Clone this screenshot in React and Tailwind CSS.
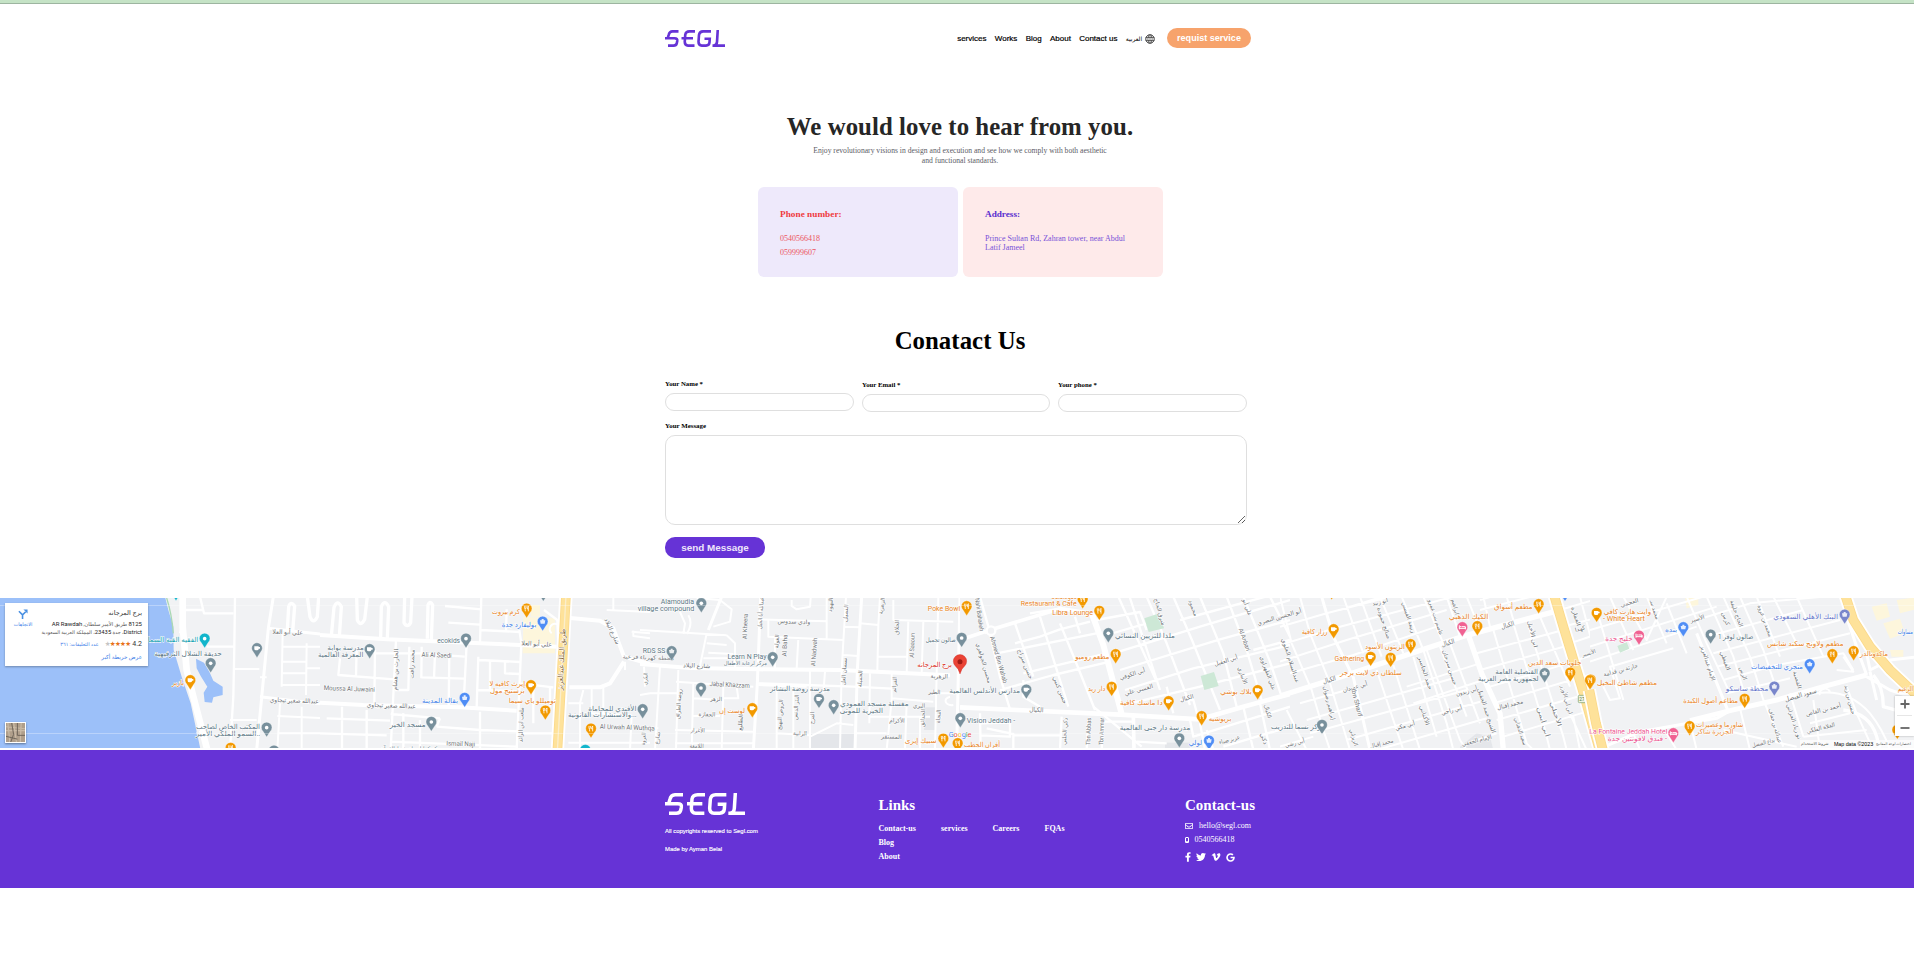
import React from "react";
import { FaRegEnvelope, FaFacebookF, FaTwitter, FaVimeoV, FaGoogle } from "react-icons/fa";

const C = {
  g: "#5b7684",
  o: "#e8811a",
  b: "#3b7de8",
  t: "#129eaf",
  p: "#ec4f8d",
  v: "#6172c9",
  r: "#d93025",
  k: "#6f7377",
  h: "#8a6a3c",
};
const PIN = { g: "#78909c", o: "#f29900", b: "#4f8df5", t: "#12b5cb", p: "#f06292", v: "#7986cb" };

// Each tile covers 330x165 map pixels, drawn on a 990x495 grid.
// labels: [text, centre x, baseline y, width, colour, rotation, size]
// pins: [x, y, colour, glyph]
const TILES = [
  {
    x: 0,
    roads: [
      [9, "M0,46H498M0,430H590"],
      [20, "M548,20V110L560,240L580,320L622,480"],
      [7, "M600,20L612,70H700M540,130L548,100M705,20L703,170L700,320L690,480M620,170H700M545,60H610"],
      [9, "M820,20L805,115L790,270L770,480M805,115L870,122L990,135M780,320L880,332L990,345"],
      [10, "M862,120L866,50Q872,32 884,48L878,125M922,20L930,80Q940,105 952,80L956,20"],
      [6, "M848,125L845,290M920,160L918,315M848,170H990M848,215H920M848,250H920M845,285H990M918,235H990M700,237H778M690,390H770M840,340L832,480M905,350V480M832,378L990,385M832,430H990M780,262H800"],
    ],
    labels: [
      ["الفقيه القبة السما", 519, 157, 152, "t"],
      ["حديقة الشلال الترفيهية", 564, 199, 203, "g"],
      ["بازير", 534, 286, 36, "o"],
      ["علي أبو العلا", 863, 133, 92, "k", 2, 19],
      ["عبدالله صغير تيجاوي", 883, 338, 147, "k", 2, 19],
      ["المكتب الخاص لصاحب", 684, 416, 192, "g"],
      ["السمو الملكي الأمير..", 684, 438, 194, "g"],
    ],
    pins: [[528, 4, "t", "d"], [614, 146, "t", "d"], [771, 175, "g", "c"], [632, 220, "g", "d"], [571, 271, "o", "c"], [800, 413, "g", "d"], [692, 474, "o", "f"], [822, 482, "g", "d"]],
  },
  {
    x: 320,
    roads: [
      [12, "M0,135L200,148L600,165L710,170M0,338L130,345L420,352L590,362"],
      [10, "M34,138L42,52Q52,26 64,50L58,140M110,20L112,90Q122,112 134,88L142,20M182,142L184,50Q194,26 206,50L202,146M254,20L252,98Q262,116 272,98L276,20M322,146L324,45Q330,30 338,45L334,150"],
      [7, "M228,150L212,480M440,160L432,320M484,20L480,160M598,120L604,160L590,480M375,48L484,58M385,98L480,104M480,120L600,126M560,58L558,126M672,60L712,90L715,170M268,170L265,300L225,300M305,170L304,265M345,190L342,265M388,190L386,350M60,205L55,255L222,268M110,175L108,258M165,180L163,338M168,190L300,190L434,200M304,262L432,266M475,200L470,350M478,210L600,216M510,215V300M555,216V250L600,252M475,300L600,304M600,280L700,292M640,290V400M690,292V350M20,385L210,392M0,430L200,436M66,350V480M140,360V480M212,372L360,385M360,385L350,410M300,390V475M350,410L480,420L590,424M480,365V480M212,455L590,470M250,370V480M600,430H720"],
      [12, "M750,84L840,92L880,115L912,200L990,222M912,215L870,280L840,292H748"],
      [6, "M790,300L780,340V480M815,295V370L935,376M850,292V370M935,376L930,480M745,340H790M745,458H990M935,125L990,130M940,122V138L990,145M860,60L990,66M880,24V62M915,215V240M972,230L975,290M695,130A14,14 0 0 1 715,105"],
    ],
    yellow: ["M738,15L728,200L712,485"],
    labels: [
      ["كرم بيروت", 558, 72, 84, "o"],
      ["بوليفارد جدة", 597, 110, 104, "b"],
      ["ecokids", 386, 160, 68, "g"],
      ["مدرسة بوابة", 77, 181, 110, "g"],
      ["المعرفة العالمية", 62, 202, 136, "g"],
      ["علي أبو العلا", 650, 168, 92, "k", 3, 19],
      ["Ali Al Saedi", 350, 202, 90, "k", 2, 20],
      ["محمد رافت", 276, 228, 88, "k", -88, 18],
      ["الحارث بن هشام", 227, 245, 125, "k", -88, 18],
      ["إيرث كافيه لا", 562, 288, 107, "o"],
      ["برستيج مول", 562, 309, 104, "o"],
      ["توميللو باي سيما", 637, 338, 142, "o"],
      ["بقالة المدينة", 360, 338, 108, "b"],
      ["Moussa Al Juwaini", 88, 303, 153, "k", 2, 20],
      ["عبدالله صغير تيجاوي", 214, 353, 147, "k", 2, 19],
      ["مسجد الخير", 263, 410, 108, "g"],
      ["Ismail Naji", 422, 468, 86, "k", 2, 20],
      ["ملعب ابن الرائد", 603, 410, 105, "k", -88, 18],
      ["طريق الملك عبدالعزيز", 726, 215, 185, "h", -87, 22],
      ["الأفندي للمحاماة", 877, 362, 145, "g"],
      ["والاستشارات القانونية...", 847, 381, 206, "g"],
      ["Al Urwah Al Wuthqa", 922, 419, 165, "k", 2, 20],
      ["شارع البلاد", 876, 130, 85, "k", 65, 18],
      ["RDS SS", 1002, 189, 68, "g"],
      ["محطة كهرباء فرعية", 985, 208, 155, "k", 2, 17],
      ["البكري", 976, 272, 35, "k", -85, 17],
      ["العروة", 970, 452, 38, "k", -85, 17],
      ["مركز كفايات لتحفيظ القرآن", 275, 482, 190, "g", 0, 19],
    ],
    pins: [[670, 6, "g", "d"], [620, 56, "o", "f"], [668, 95, "b", "b"], [438, 146, "g", "d"], [149, 178, "g", "c"], [633, 286, "o", "c"], [434, 324, "b", "b"], [676, 362, "o", "f"], [334, 396, "g", "d"], [968, 358, "g", "d"], [813, 416, "o", "f"], [796, 480, "t", "d"]],
  },
  {
    x: 640,
    roads: [
      [12, "M0,222L150,234L355,238L600,240L930,256"],
      [9, "M362,20L352,280L340,480M665,20L652,240L645,480M245,20L205,120M960,20L950,480"],
      [6, "M120,66L135,100L130,132M145,76Q160,100 140,132M0,120L260,136M200,130L180,228M260,136L285,160V232M200,160L260,165M205,188L280,192M190,205H280M170,24L240,30L275,58L270,95L220,110M455,30V48L470,58L510,50L512,24M355,88L560,94M385,90V140L610,150M405,145V235M475,145L470,235M560,20V145M618,20L605,240L600,480M610,110L660,112M610,195L655,198M660,100L715,105L720,20M715,105L712,240M715,200H800M805,90L800,250M760,30V90L940,95M850,95L845,250M895,20L885,480M115,240L108,480M108,275L340,290M160,282L155,480M250,290L245,480M160,325L245,330M290,290L295,325H245M160,378H240M105,420L340,425M105,460H340M60,228L45,480M0,410L55,415M355,285L500,290M410,290V480M460,290V480M510,240V480M410,430L510,436M510,440L590,400L640,405M555,245L550,310M755,250V330L740,480M690,250L688,400M755,325L880,335M690,380H870M650,430H740M800,340L795,480M840,380V480M930,320A14,10 0 1 0 940,345M880,310H945M110,310H30M0,315L30,310"],
      [7, "M355,280L640,290M640,290L755,296"],
    ],
    shade: ["M512,432H645V480H512Z", "M852,352H886V420H852Z"],
    labels: [
      ["Alamoudia", 112, 43, 100, "g", 0, 21],
      ["village compound", 78, 64, 170, "g", 0, 21],
      ["Poke Bowl", 912, 63, 97, "o", 0, 21],
      ["وادي سدوس", 462, 101, 98, "k", 2, 18],
      ["صالون تجميل", 902, 156, 90, "g", 0, 19],
      ["Learn N Play", 321, 208, 117, "g", 0, 21],
      ["مركز لرعاية الأطفال", 316, 225, 130, "g", 0, 17],
      ["شارع البلاد", 170, 233, 82, "k", 2, 18],
      ["برج المرجانه", 884, 230, 104, "r"],
      ["Jabal Khazzam", 269, 291, 121, "k", 3, 20],
      ["مدرسة روضة البشائر", 480, 304, 180, "g"],
      ["مغسلة مسجد العمودي", 703, 349, 206, "g"],
      ["الخيرية للموتى", 664, 369, 130, "g"],
      ["لوست إن", 276, 370, 78, "o"],
      ["سبيك إيزى", 842, 458, 95, "o"],
      ["الزهر", 228, 333, 36, "k", 2, 18],
      ["الحفازة", 201, 379, 50, "k", 2, 18],
      ["الأغرار", 173, 427, 42, "k", 2, 18],
      ["اللامعة", 170, 474, 42, "k", 2, 18],
      ["الرابية", 480, 436, 42, "k", 2, 18],
      ["الأكرام", 771, 398, 46, "k", 2, 18],
      ["المستقر", 754, 446, 62, "k", 2, 18],
      ["البري", 837, 353, 36, "k", 2, 18],
      ["الطير", 883, 312, 36, "k", 2, 18],
      ["الزهرية", 898, 265, 52, "k", 2, 18],
      ["Al Kheera", 316, 115, 77, "k", -88, 19],
      ["عبدالله أبا الخيل", 362, 75, 96, "k", -86, 17],
      ["الغولة", 410, 160, 42, "k", -86, 17],
      ["Al Baha", 435, 172, 66, "k", -88, 19],
      ["Al Nadwah", 523, 192, 85, "k", -86, 19],
      ["النميل", 617, 75, 54, "k", -86, 17],
      ["النهود", 571, 50, 44, "k", -86, 17],
      ["الزهرية", 725, 54, 50, "k", -80, 17],
      ["الخلاق", 770, 118, 44, "k", -86, 17],
      ["Al Saaoun", 817, 172, 74, "k", -88, 19],
      ["الجميلة", 660, 272, 50, "k", -86, 17],
      ["نسمان العل", 612, 250, 84, "k", -86, 17],
      ["الفرائم", 763, 290, 46, "k", -86, 17],
      ["روضة الطراق", 116, 348, 90, "k", -86, 17],
      ["الروض النهيج", 420, 380, 92, "k", -86, 17],
      ["البئر الدنس", 468, 358, 76, "k", -86, 17],
      ["المرح", 516, 390, 36, "k", -86, 17],
      ["الطليع", 301, 403, 50, "k", -86, 17],
      ["الحداثق", 848, 390, 55, "k", -86, 17],
      ["النجاة", 895, 385, 40, "k", -86, 17],
      ["شارع", 52, 450, 38, "k", -80, 17],
    ],
    pins: [[184, 40, "g", "d"], [95, 184, "g", "b"], [980, 49, "o", "f"], [965, 144, "g", "d"], [398, 202, "g", "d"], [183, 294, "g", "d"], [537, 327, "g", "c"], [581, 346, "g", "d"], [337, 355, "o", "c"], [961, 385, "g", "d"], [910, 446, "o", "f"], [953, 460, "o", "f"]],
  },
  {
    x: 960,
    roads: [
      [14, "M0,352L170,360L480,374L720,388L850,350L990,312"],
      [18, "M395,70L430,165L485,372"],
      [11, "M395,70L300,56L90,120L0,150M520,375L522,480"],
      [7, "M60,20L85,110L120,260L150,358M90,120L75,130M240,80L325,350M165,100L220,260M210,70L300,56M165,160L240,140L300,118L390,95M110,190L420,128M190,250L440,190M190,270L190,320L240,350M120,300L280,255L450,215M300,100L345,210L405,360M345,80L360,130M475,20L590,275M510,24L600,300M410,90L540,66L560,120M440,135L560,100M460,190L720,110L990,30M480,240L780,148L990,90M495,300L700,235L990,165M510,340L720,290L990,220M560,20L620,160L690,345M640,20L700,160L780,360M720,20L790,190L830,350M800,20L860,180L905,330M850,20L930,215L965,320M620,290L640,370M580,20L990,-60M660,90L990,0M930,20L990,140M880,180L990,150M660,330H700L715,385M60,370L62,480M62,400L150,398V440L62,436M80,415L160,432V480M305,380L300,480M385,385L380,480M430,385L425,480M430,395H520M530,455L620,460M690,390L700,440L990,350M740,420L760,480M850,350L880,480M900,340L930,480M720,400L735,480M790,470L990,410M160,436H300"],
      [7, "M400,350L545,470M560,20L640,0"],
    ],
    green: ["M553,85L598,70L612,115L566,126Z", "M722,258L762,246L776,288L733,300Z"],
    shade: ["M615,458H690V480H615Z"],
    circles: [[93, 122, 13]],
    labels: [
      ["Catalogue", 312, 27, 76, "o", 0, 20],
      ["Restaurant & Cafe", 266, 47, 168, "o", 0, 20],
      ["Libra Lounge", 338, 76, 122, "o", 0, 20],
      ["ملذا للتزيين النسائي", 555, 143, 180, "g"],
      ["مطعم روميو", 397, 207, 102, "o"],
      ["دار ريد", 410, 304, 52, "o"],
      ["دا ماسك كافية", 544, 346, 128, "o"],
      ["بلاك بوشي", 828, 313, 94, "o"],
      ["بريوشيه", 780, 393, 68, "o"],
      ["مدارس الأندلس العالمية", 74, 310, 212, "g"],
      ["Vision Jeddah -", 93, 398, 145, "g", 0, 21],
      ["أفران الحطب", 66, 470, 108, "o"],
      ["مدرسة دار جنى العالمية", 585, 420, 212, "g"],
      ["لولي", 706, 466, 40, "b"],
      ["الكيال", 229, 366, 42, "k", 3, 20],
      ["أبي الكوفي", 517, 258, 80, "k", -17, 18],
      ["القسي علي", 536, 305, 88, "k", -15, 18],
      ["أبي العقيل", 798, 218, 72, "k", -17, 18],
      ["الكيال", 680, 330, 42, "k", -15, 18],
      ["حسن البصري", 938, 92, 95, "k", -17, 18],
      ["عزيز ضياء", 808, 455, 64, "k", -15, 18],
      ["Ahmed Bin Wahab", 116, 215, 145, "k", 74, 19],
      ["Tbn Abbas", 386, 430, 82, "k", -88, 19],
      ["Tbn Ammar", 425, 430, 82, "k", -88, 19],
      ["Nahi Bahakeh", 58, 80, 100, "k", 82, 19],
      ["محسن الجواهري", 72, 225, 125, "k", 74, 17],
      ["حسن سراج", 196, 228, 95, "k", 68, 17],
      ["حسن كتبي", 300, 306, 88, "k", 68, 17],
      ["Al Anbari", 853, 155, 70, "k", 70, 19],
      ["شرق الحاج", 600, 72, 84, "k", 74, 17],
      ["الأنباري", 848, 262, 55, "k", 70, 17],
      ["علي الطهراوي", 924, 255, 108, "k", 70, 17],
      ["الكيال", 924, 370, 42, "k", 74, 17],
      ["محمود", 700, 60, 52, "k", 70, 17],
      ["علي أبو", 862, 58, 52, "k", 70, 17],
      ["ذكي الحلبي", 314, 430, 82, "k", -86, 17],
      ["ذكي", 912, 452, 36, "k", 72, 17],
      ["مركز نسما للتدريب", 1014, 417, 162, "g"],
    ],
    pins: [[368, 28, "o", "f"], [418, 63, "o", "f"], [445, 130, "g", "d"], [467, 193, "o", "f"], [455, 291, "o", "f"], [626, 334, "o", "c"], [893, 301, "o", "c"], [725, 379, "o", "f"], [199, 299, "g", "c"], [658, 445, "g", "d"], [747, 452, "b", "b"]],
  },
  {
    x: 1280,
    roads: [
      [16, "M0,318L200,255L440,175L560,136L700,98L835,62"],
      [16, "M565,135L605,250L660,370L670,480"],
      [9, "M125,20L160,140L220,262L270,480"],
      [6, "M60,20L90,130L150,280L210,480M0,20L35,160L95,300L130,420L150,480M190,20L250,190M240,20L305,200M300,20L370,190M365,20L430,180L500,400L520,480M430,20L490,160M500,20L540,140M180,60L560,-60M0,110L140,70L560,-40M0,165L180,110L520,20M0,215L200,150L500,60M30,250L220,195L470,110M80,390L520,265M60,340L200,300M90,430L560,300M200,450L600,335M290,480L620,385M290,240L370,480M340,225L420,480M400,200L470,440M440,180L540,450L560,480M480,170L560,380M510,160L600,400M380,290L600,220M400,340L610,270M560,460L650,430M640,120L740,460L760,480M700,100L790,400L810,480M740,90L850,440L860,480M780,80L870,290M590,190L850,120M600,240L870,165M630,290L880,215M640,340L900,262M650,390L910,315M670,440L920,365M560,20L600,120M610,20L630,110M680,20L700,90M600,60L830,0M600,30L700,0M840,60L990,15M850,110L990,72M870,160L990,120M890,210L990,180M910,260L990,235M900,20L960,250M950,20L990,140M880,380L900,480M0,470L100,440M20,360L80,480M860,350L920,480"],
      [8, "M985,200L990,260L970,340L990,460M930,300L990,420"],
    ],
    yellow: ["M822,15L850,110L905,290L960,485"],
    shade: ["M540,470L590,430L630,440L640,480H540Z"],
    labels: [
      ["أبو الحسن", 28, 78, 74, "k", -16, 18],
      ["رزاز كافية", 104, 132, 78, "o"],
      ["الزيتون الأسود", 315, 178, 120, "o"],
      ["Gathering", 208, 214, 89, "o", 0, 21],
      ["سلطان دي لايت برجر", 273, 254, 186, "o"],
      ["الكيك الذهبي", 566, 88, 118, "o"],
      ["مطعم أسواق", 700, 57, 116, "o"],
      ["القنصلية العامة", 710, 253, 128, "g"],
      ["لجمهورية مصر العربية", 685, 273, 182, "g"],
      ["حلويات سعد الدين", 824, 226, 160, "o"],
      ["الكيال", 148, 276, 40, "k", -16, 20],
      ["الكيال", 504, 165, 40, "k", -16, 20],
      ["الكيال", 683, 112, 40, "k", -16, 20],
      ["أبي عميدان", 225, 297, 76, "k", -15, 18],
      ["أبي زيدون", 560, 310, 66, "k", -15, 18],
      ["أبي راجي", 515, 367, 64, "k", -15, 18],
      ["أبي مكي", 375, 413, 60, "k", -15, 18],
      ["محمد إقبال", 690, 350, 80, "k", -14, 18],
      ["محمد إقبال", 305, 466, 72, "k", -14, 18],
      ["أبي رشي", 44, 465, 60, "k", -14, 18],
      ["الإمام الجعفي", 590, 457, 92, "k", -14, 18],
      ["أبو زبيد", 300, 42, 48, "k", -14, 18],
      ["Ibn Sharif", 230, 344, 86, "k", 76, 19],
      ["عبدالسلام العلوي", 32, 218, 140, "k", 72, 17],
      ["صالح حمودة", 312, 105, 98, "k", 72, 17],
      ["ربيعة القيسي", 386, 88, 98, "k", 72, 17],
      ["عاصم بنت عمرو", 468, 88, 112, "k", 72, 17],
      ["إبراهيم رضوان", 148, 345, 105, "k", 76, 17],
      ["حمد الجاسر", 436, 255, 104, "k", 72, 17],
      ["حسين سرحان", 510, 238, 110, "k", 72, 17],
      ["الأكناني", 434, 382, 62, "k", 72, 17],
      ["الشيخ حمد الحقيل", 620, 368, 140, "k", 72, 18],
      ["ابن الأخيل", 758, 138, 82, "k", 76, 17],
      ["سعيد الذهباني", 722, 430, 86, "k", 72, 17],
      ["الأخيلي", 828, 378, 78, "k", 72, 17],
      ["أبي أيمن", 790, 402, 92, "k", 74, 17],
      ["ابن أبي الأوزر", 860, 335, 88, "k", 74, 17],
      ["ابراهيم", 526, 56, 48, "k", 76, 17],
      ["الغفارة", 888, 85, 60, "k", 72, 17],
      ["كهدا", 900, 122, 32, "k", -16, 17],
      ["الأتسير", 926, 195, 42, "k", -16, 17],
      ["الزيزاني", 222, 448, 52, "k", 74, 17],
    ],
    pins: [[155, 1, "o", "d"], [855, 6, "b", "d"], [161, 118, "o", "c"], [392, 163, "o", "f"], [272, 201, "o", "c"], [332, 204, "o", "f"], [547, 112, "p", "h"], [592, 109, "o", "f"], [776, 43, "o", "f"], [794, 250, "g", "b"], [871, 248, "o", "f"], [932, 269, "o", "f"], [126, 405, "g", "d"]],
    shields: [[910, 327]],
  },
  {
    x: 1590,
    roads: [
      [15, "M300,392L420,362L560,330L700,290L830,255"],
      [9, "M320,130L415,365L380,385L150,425L20,480M830,255L810,200L780,110L760,60M830,190L840,240L900,210L990,200M830,260L900,300L990,330M840,245L860,330M900,220L960,300"],
      [6, "M20,60L100,330M60,20L130,180M100,20L170,150L230,20M0,120L340,20M0,170L380,50M0,215L320,110M40,290L60,330L90,325L60,230L250,175M170,20L230,160M230,40L290,190M290,20L350,160L420,310M350,20L430,200L460,300M400,20L480,200L520,330M450,20L520,180L560,300M500,20L570,200M550,20L620,160M320,90L480,40L700,20M350,140L640,60M370,190L750,90M380,230L780,130M400,270L560,225L760,190L790,240M410,310L600,265M620,20L700,200M520,330L580,470M600,310L640,440M400,420L620,470M640,320Q760,280 840,370Q880,420 900,480M670,330L690,480M690,315A16,14 0 1 1 720,305M770,290L800,370L850,480M660,400L780,370M640,440L830,420M300,395L320,480M450,355L480,480M130,430L150,480M230,430L260,480M740,240L790,245L760,200"],
      [10, "M760,360Q840,370 860,440L870,480M850,255Q880,290 880,350L990,380"],
    ],
    yellow: ["M-2,300L18,400L40,485", "M762,5L790,90L840,170L900,240L990,325"],
    blocks: ["M285,20H325V45L290,55Z", "M845,50L890,40L900,80L860,92Z", "M920,30L990,20V55L930,70Z", "M880,100L930,86L945,130L900,146Z", "M900,180H940V200H905Z"],
    green: ["M82,168L110,156L118,176L90,188Z"],
    labels: [
      ["وايت هارت كافي", 112, 73, 142, "o"],
      ["- White Heart", 102, 94, 126, "o", 0, 20],
      ["خليج جدة", 87, 152, 82, "p"],
      ["بنده", 243, 127, 36, "b"],
      ["مطعم شاطئ النخيل", 111, 284, 180, "o"],
      ["صالون لوفر 1", 437, 147, 106, "g"],
      ["البنك الأهلي السعودي", 647, 87, 195, "v"],
      ["مطعم ولاونج سكند شانس", 646, 169, 230, "o"],
      ["ماكدونالدز", 852, 197, 84, "o"],
      ["متجري للتخفيضات", 561, 236, 156, "b"],
      ["محطة ساسكو", 471, 303, 128, "v"],
      ["مطاعم أصول الكبدة", 362, 340, 165, "o"],
      ["شاورما وعصيرات", 389, 412, 142, "o"],
      ["الجزيرة شاكر", 374, 432, 112, "o"],
      ["La Fontaine Jeddah Hotel", 115, 433, 234, "p", 0, 21],
      ["فندق لافونتين جدة -", 142, 453, 178, "p"],
      ["مساوات", 946, 132, 46, "b"],
      ["الزعيم", 946, 302, 46, "o"],
      ["سعود الفيصل", 632, 322, 98, "k", -16, 20],
      ["حارثة بن قدامة", 92, 246, 106, "k", -15, 18],
      ["الأسير", 322, 92, 44, "k", -16, 18],
      ["العجمي", 118, 44, 56, "k", -15, 18],
      ["أحمد بن القاص", 700, 365, 108, "k", -14, 18],
      ["الفلاة الفلكي", 692, 420, 88, "k", -14, 18],
      ["بداع الفيصل", 520, 464, 70, "k", -14, 18],
      ["الإمام عبدالعزيز", 354, 225, 110, "k", 72, 17],
      ["الفيطي", 406, 218, 60, "k", 70, 17],
      ["الرس", 460, 256, 40, "k", 72, 17],
      ["الحاج خليفة", 440, 76, 85, "k", 70, 17],
      ["محمد بن عروة", 525, 98, 100, "k", 70, 17],
      ["كرس", 408, 92, 42, "k", 70, 17],
      ["القضبة", 622, 275, 55, "k", 74, 17],
      ["عبدالله بن خفاف", 556, 414, 106, "k", 74, 17],
      ["نو زياد العراني", 612, 400, 110, "k", 72, 17],
      ["حسن بن زيد", 780, 335, 90, "k", 76, 17],
      ["محمد سـ", 194, 65, 60, "k", 72, 17],
    ],
    pins: [[20, 69, "o", "c"], [147, 137, "p", "h"], [280, 112, "b", "b"], [0, 271, "o", "f"], [362, 134, "g", "d"], [764, 74, "v", "b"], [727, 193, "o", "f"], [791, 184, "o", "f"], [659, 223, "b", "b"], [553, 290, "v", "b"], [464, 327, "o", "f"], [299, 409, "o", "f"], [250, 430, "p", "h"], [922, 420, "o", "d"]],
  },
];

function Pin({ x, y, c, k }) {
  return (
    <g transform={`translate(${x} ${y})`}>
      <path d="M0,28L-11,11A16,16 0 1 1 11,11Z" fill={PIN[c]} stroke="#fff" strokeWidth="1" />
      {k === "d" && <circle r="5.5" fill="#fff" />}
      {k === "f" && <path d="M-6,-8V-2Q-4,1 -4,8M-2,-8V-2L-4,1M5,8V-8Q1,-5 2,1H5" fill="none" stroke="#fff" strokeWidth="2.4" />}
      {k === "c" && <path d="M-8,-6H5V2Q5,6 0,6H-3Q-8,6 -8,2ZM5,-4H9V1H5" fill="#fff" />}
      {k === "b" && <path d="M-8,-4H8L6,6H-6ZM-3,-4V-8H3V-4" fill="#fff" fillOpacity=".85" />}
      {k === "h" && <path d="M-9,-6V6M-9,3H9V-2H-2M9,0V6M-7,-2H-3" fill="none" stroke="#fff" strokeWidth="3" />}
    </g>
  );
}

function MapDrawing() {
  return (
    <svg className="block h-[150px] w-full" viewBox="0 598 1914 150" preserveAspectRatio="none">
      <rect x="0" y="598" width="1914" height="150" fill="#f1f2f4" />
      <g transform="translate(0 590) scale(.33333)">
        <path d="M0,0H490L505,60L520,110L521,180L545,260L572,340L605,495H0Z" fill="#9cc0f9" />
        <path d="M500,24Q515,70 520,130" fill="none" stroke="#a9d8b4" strokeWidth="4" />
        <path d="M588,206L612,218L628,245L640,272L668,290V315L640,322L636,338L614,336L611,308L622,290L602,258L590,235Z" fill="#9cc0f9" />
      </g>
      <g transform="translate(320 590) scale(.33333)">
        <path d="M610,80L705,85V190L608,190Z" fill="#fdf6dc" />
        <path d="M632,45H660V80H632Z" fill="#fdf6dc" />
      </g>
      {TILES.map((t) => (
        <g key={t.x} transform={`translate(${t.x} 590) scale(.33333)`} fill="none">
          {(t.shade || []).map((d) => <path key={d} d={d} fill="#e4e6ea" />)}
          {(t.blocks || []).map((d) => <path key={d} d={d} fill="#fdf6dc" />)}
        </g>
      ))}
      <clipPath id="land">
        <path d="M163,590L168,610L173,627L174,650L181,677L190,703L201,755H1920V590Z" />
      </clipPath>
      <g clipPath="url(#land)">
        {TILES.map((t, i) => (
          <svg key={t.x} x={t.x} y="590" width={i === 4 ? 310 : t.x === 0 || i === 2 ? 320 : 330} height="165" viewBox={`0 0 ${i === 4 ? 930 : t.x === 0 || i === 2 ? 960 : 990} 495`} fill="none">
            {t.roads.map(([w, d], j) => (
              <path key={j} d={d} stroke="#fff" strokeWidth={w} strokeLinejoin="round" />
            ))}
            {(t.circles || []).map(([x, y, r]) => (
              <circle key={x} cx={x} cy={y} r={r} stroke="#fff" strokeWidth="7" fill="#f1f2f4" />
            ))}
            {(t.green || []).map((d) => <path key={d} d={d} fill="#cde8d6" />)}
          </svg>
        ))}
      </g>
      {TILES.map((t) => (
        <g key={t.x} transform={`translate(${t.x} 590) scale(.33333)`} fill="none">
          {(t.yellow || []).map((d) => (
            <g key={d}>
              <path d={d} stroke="#fff" strokeWidth="40" />
              <path d={d} stroke="#fbd98a" strokeWidth="29" />
              <path d={d} stroke="#fee29a" strokeWidth="24" />
              {t.x === 320 && <path d={d} stroke="#fbeecb" strokeWidth="4" />}
            </g>
          ))}
          {(t.shields || []).map(([x, y]) => (
            <g key={x}>
              <rect x={x - 15} y={y - 11} width="30" height="22" rx="3" fill="#eef5e6" stroke="#8aa978" strokeWidth="2.5" />
              <text x={x} y={y + 7} textAnchor="middle" fontSize="18" textLength="24" lengthAdjust="spacingAndGlyphs" fill="#56743f">271</text>
            </g>
          ))}
        </g>
      ))}
      {TILES.map((t) => (
        <g key={t.x} transform={`translate(${t.x} 590) scale(.33333)`}>
          {t.labels.map(([s, x, y, w, c, r, f], i) => (
            <text
              key={i}
              x={x}
              y={y}
              textAnchor="middle"
              textLength={w}
              lengthAdjust="spacingAndGlyphs"
              fontSize={f || 21}
              fill={C[c]}
              stroke="#fff"
              strokeWidth="3"
              paintOrder="stroke"
              transform={r ? `rotate(${r} ${x} ${y - 6})` : undefined}
            >
              {s}
            </text>
          ))}
          {t.pins.map(([x, y, c, k], i) => <Pin key={i} x={x} y={y} c={c} k={k} />)}
        </g>
      ))}
      <g transform="translate(640 590) scale(.33333)">
        <path d="M960,252Q956,236 946,228A20,20 0 1 1 974,228Q964,236 960,252Z" fill="#ea4335" stroke="#c5221f" strokeWidth="1" />
        <circle cx="960" cy="215" r="7.5" fill="#a11b14" />
        <text x="926" y="442" fontSize="22" textLength="68" fill="#4285f4" stroke="#fff" strokeWidth="2" paintOrder="stroke">
          G<tspan fill="#ea4335">o</tspan><tspan fill="#fbbc04">o</tspan><tspan fill="#4285f4">g</tspan><tspan fill="#34a853">l</tspan><tspan fill="#ea4335">e</tspan>
        </text>
      </g>
      <path d="M0,605.5H1914M0,733.5H1914" stroke="#fff" strokeOpacity=".3" />
    </svg>
  );
}

function Logo({ className }) {
  return (
    <svg className={className} viewBox="0 0 240 66" preserveAspectRatio="none" fill="none" stroke="currentColor" strokeWidth="10.500">
      <path d="M54,5.500H30Q18,6 15,18L11,32M0,32H38Q51,32 49,43L47,52Q45,60.500 34,60.500H12" />
      <path d="M120,5.500H98Q83,6 81,18L79,46Q79,60.500 92,60.500H118M66,32H112" />
      <path d="M184,5.500H152Q138,6 136,19L134,46Q134,60.500 147,60.500H164Q177,60 178,48L179,34H158" />
      <path d="M211,0L208,46Q207,60.500 194,60.500M190,60.500H240" />
    </svg>
  );
}

function Field({ label, className }) {
  return (
    <label className={`flex flex-col ${className}`}>
      <span className="text-[6.8px] leading-[8px] font-bold">{label}</span>
      <input className="mt-[5px] h-[18px] w-full rounded-[9px] border border-[#dfdfdf] px-2 text-[8px] outline-none" />
    </label>
  );
}

export default function App() {
  return (
    <div className="min-h-[970px] w-full overflow-hidden bg-white font-['Liberation_Serif','Noto_Sans',serif] text-black">
      <div className="h-1 border-b border-[#9db5a0] bg-[#c5e3c6]" />

      <header className="mx-auto flex h-[68px] w-[602px] items-center justify-between pr-[7px] pl-[9px] font-['Liberation_Sans','DejaVu_Sans',sans-serif]">
        <Logo className="h-[17px] w-[60px] text-[#6633d6]" />
        <nav className="flex items-center gap-[8.300px] pt-px text-[8px] leading-[10px] font-normal text-black [-webkit-text-stroke:0.2px_black]">
          <a>services</a>
          <a>Works</a>
          <a>Blog</a>
          <a>About</a>
          <a>Contact us</a>
          <a className="flex items-center gap-[2px]">
            <span className="w-[17px] text-[6px] whitespace-nowrap [-webkit-text-stroke:0]">العربية</span>
            <svg className="size-[10px]" viewBox="0 0 20 20" fill="none" stroke="#222" strokeWidth="1.700">
              <circle cx="10" cy="10" r="8.500" />
              <path d="M10,1V19M1.500,7H18.500M1.500,13H18.500M8,1.500Q3,10 8,18.500M12,1.500Q17,10 12,18.500" strokeWidth="1.200" />
            </svg>
          </a>
          <button className="-mt-px ml-[4px] h-5 w-[84px] rounded-full bg-[#f7a36c] text-[9.050px] leading-[10px] font-bold text-white [-webkit-text-stroke:0]">requist service</button>
        </nav>
      </header>

      <main className="mx-auto w-[584px] pt-10">
        <section className="flex flex-col items-center pl-[6px]">
          <h1 className="text-[24.800px] leading-[29px] font-bold tracking-[0.070px] whitespace-nowrap text-[#262626]">We would love to hear from you.</h1>
          <p className="mt-[5px] w-[300px] text-center text-[7.640px] leading-[10px] text-[#5c5c66]">
            Enjoy revolutionary visions in design and execution and see how we comply with both aesthetic and functional standards.
          </p>
          <div className="mt-[21px] flex gap-[5px]">
            <div className="h-[90px] w-[200px] rounded-md bg-[#eee9fb] pt-[21px] pr-[22px] pl-[22.500px]">
              <h2 className="text-[9.200px] leading-[12px] font-bold tracking-[0.050px] text-[#ee3a3f]">Phone number:</h2>
              <p className="mt-[14px] text-[8px] leading-[10px] text-[#ec5560]">0540566418</p>
              <p className="mt-1 text-[8px] leading-[10px] text-[#ec5560]">059999607</p>
            </div>
            <div className="h-[90px] w-[200px] rounded-md bg-[#feeaea] pt-[21px] pr-[22px] pl-[22.500px]">
              <h2 className="text-[9.200px] leading-[12px] font-bold text-[#5a2fcf]">Address:</h2>
              <p className="mt-[14px] text-[8px] leading-[9px] text-[#7852d8]">Prince Sultan Rd, Zahran tower, near Abdul Latif Jameel</p>
            </div>
          </div>
          <h2 className="mt-[50px] text-[24.800px] leading-[28px] font-bold tracking-[0.050px]">Conatact Us</h2>
        </section>

        <form className="mt-[25px]">
          <div className="flex gap-2">
            <Field label="Your Name *" className="w-[189px]" />
            <Field label="Your Email *" className="w-[188px] pt-px" />
            <Field label="Your phone *" className="w-[189px] pt-px" />
          </div>
          <label className="mt-[10px] flex w-[582px] flex-col">
            <span className="text-[6.900px] leading-[8px] font-bold">Your Message</span>
            <textarea className="mt-[5px] block h-[90px] w-full rounded-[10px] border border-[#dfdfdf] p-2 text-[8px] outline-none" />
          </label>
          <button type="button" className="mt-3 block h-[21px] w-[100px] rounded-[10px] bg-[#6633d6] font-['Liberation_Sans',sans-serif] text-[9.900px] leading-[12px] font-bold text-[#eee6fb]">
            send Message
          </button>
        </form>
      </main>

      <section className="relative mt-10 h-[150px] overflow-hidden font-['Roboto','DejaVu_Sans',sans-serif]">
        <MapDrawing />
        <div dir="rtl" className="absolute top-[5px] left-[5px] flex h-[63px] w-[143px] justify-between bg-white px-[6px] pt-[6px] text-[6px] leading-[8px] whitespace-nowrap text-[#555] shadow-[0_1px_2px_rgba(0,0,0,0.3)]">
          <div className="flex flex-col items-start">
            <p className="text-[6.500px] text-[#333]">برج المرجانه</p>
            <p className="mt-[3px] text-[5.200px]"><span className="text-[6px] text-[#222]">8125</span> طريق الأمير سلطان, <span className="text-[6px] text-[#222]">AR Rawdah</span></p>
            <p className="text-[5px]"><span className="text-[5.800px] text-[#222]">District</span>، جدة <span className="text-[5.800px] text-[#222]">23435</span>، المملكة العربية السعودية</p>
            <p className="mt-1 flex items-center gap-[2px]">
              <span className="text-[7px] text-[#333]">4.2</span>
              <span className="text-[6.500px] leading-[8px] tracking-[-0.700px] text-[#e7711b]">★★★★<span className="text-[#c5c5c5]">★</span></span>
              <span className="mr-1 text-[5px] text-[#3b7de8]">عدد التعليقات: ٣٦١</span>
            </p>
            <p className="mt-[5px] text-[5.600px] text-[#3b7de8]">عرض خريطة أكبر</p>
          </div>
          <div className="absolute top-[6px] left-[8px] flex w-[20px] flex-col items-center text-[#3b7de8]">
            <svg className="size-[10px]" viewBox="0 0 22 22" fill="none" stroke="#4a90e2" strokeWidth="3.500">
              <path d="M10,22V13L2,5M10,13L17,6" />
              <path d="M12,1H21V10Z" fill="#4a90e2" stroke="none" />
            </svg>
            <span className="mt-[2px] text-[4.800px]">الاتجاهات</span>
          </div>
        </div>
        <div className="absolute bottom-[5px] left-[5px] size-[21px] overflow-hidden border border-white shadow-[0_1px_2px_rgba(0,0,0,0.4)]">
          <svg className="block size-full" viewBox="0 0 20 20">
            <rect width="20" height="20" fill="#b09f8b" />
            <path d="M2,0L4,20M8,0L11,20M0,8H20M0,4L20,6M16,0L15,20" stroke="#cabba7" strokeWidth="1.200" />
            <path d="M12,0V13H20M6,0L8,12L5,20M0,14L12,17" stroke="#6d6358" strokeWidth="1" fill="none" />
          </svg>
        </div>
        <div className="absolute top-[98px] right-0 flex h-10 w-[19px] flex-col items-center justify-around bg-white shadow-[0_0_2px_rgba(0,0,0,0.3)]">
          <svg className="size-[10px]" viewBox="0 0 10 10" stroke="#666" strokeWidth="1.800"><path d="M5,.5V9.500M.5,5H9.500" /></svg>
          <div className="h-px w-[15px] bg-[#e6e6e6]" />
          <svg className="size-[10px]" viewBox="0 0 10 10" stroke="#666" strokeWidth="1.800"><path d="M.5,5H9.500" /></svg>
        </div>
        <div className="absolute right-0 bottom-0 flex h-[8px] w-[114px] items-center justify-between bg-white/70 pl-[1px] text-[5.400px] leading-[8px] whitespace-nowrap text-[#222]">
          <span className="w-[30px] text-[3.900px] text-[#555]">شروط الاستخدام</span>
          <span className="font-['Liberation_Sans',sans-serif] text-[5.300px] text-black">Map data ©2023</span>
          <span className="w-[38px] text-[3.600px] text-[#555]">اختصارات لوحة المفاتيح</span>
        </div>
      </section>

      <footer className="mt-[2px] h-[138px] bg-[#6633d6] text-white">
        <div className="mx-auto flex w-[596px] pl-[6px]">
          <div className="w-[213.500px] pt-[43px] font-['Liberation_Sans',sans-serif] text-[5.930px] leading-[8px] [-webkit-text-stroke:0.15px_white]">
            <Logo className="h-[22px] w-[80px]" />
            <p className="mt-3">All copyrights reserved to Segl.com</p>
            <p className="mt-[10px]">Made by Ayman Belal</p>
          </div>
          <div className="w-[306.500px] pt-[46px]">
            <h3 className="text-[15px] leading-[18px] font-bold">Links</h3>
            <div className="mt-[10px] flex text-[8px] leading-[10px] font-bold">
              <ul className="flex w-[62.500px] flex-col gap-1">
                <li>Contact-us</li>
                <li>Blog</li>
                <li>About</li>
              </ul>
              <span className="w-[51.500px]">services</span>
              <span className="w-[52px]">Careers</span>
              <span>FQAs</span>
            </div>
          </div>
          <div className="pt-[46px] text-[8px] leading-[10px]">
            <h3 className="text-[15px] leading-[18px] font-bold whitespace-nowrap">Contact-us</h3>
            <p className="mt-[7px] flex items-center gap-[6px]"><FaRegEnvelope className="size-[8px]" />hello@segl.com</p>
            <p className="mt-1 flex items-center gap-[5.500px]">
              <svg className="h-[6px] w-[4px]" viewBox="0 0 8 12" fill="none" stroke="#fff" strokeWidth="2"><rect x="1" y="1" width="6" height="10" rx="1" /><path d="M1,10H7" strokeWidth="3" /></svg>
              0540566418
            </p>
            <div className="mt-[7px] flex items-center gap-[5px]">
              <FaFacebookF className="h-[10px] w-[6px]" />
              <FaTwitter className="size-[10px]" />
              <FaVimeoV className="size-[10px]" />
              <FaGoogle className="size-[9px]" />
            </div>
          </div>
        </div>
      </footer>
    </div>
  );
}
